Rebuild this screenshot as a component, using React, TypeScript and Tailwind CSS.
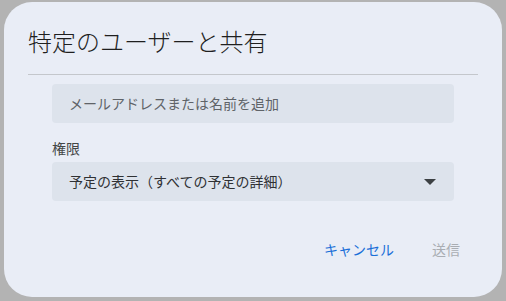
import React from 'react'

export default function App() {
  return (
    <div
      className="w-[506px] h-[301px] bg-[#b3b3b3] pl-[4px] pt-[2px]"
      style={{ fontFamily: '"Noto Sans CJK JP", "Noto Sans", Roboto, sans-serif' }}
    >
      <div className="w-[498px] h-[295px] bg-[#e9edf6] rounded-[28px] flex flex-col">
        {/* Title */}
        <h1 className="pl-[24px] pt-[23px] text-[24px] leading-[32px] text-[#1f1f1f] font-light">
          特定のユーザーと共有
        </h1>

        {/* Divider */}
        <div className="mx-[24px] mt-[17px] h-px bg-[#c4c7cc]" />

        {/* Body */}
        <div className="px-[48px] pt-[9px] flex flex-col">
          <div className="h-[39px] rounded-[4px] bg-[#dde3ec] flex items-center pl-[17px] text-[14px] text-[#5f6368]">
            メールアドレスまたは名前を追加
          </div>

          <div className="mt-[15px] text-[14px] leading-[20px] text-[#444746]">権限</div>

          <div className="mt-[4px] h-[39px] rounded-[4px] bg-[#dde3ec] flex items-center justify-between pl-[17px] pr-[17px] text-[14px] text-[#2f3134]">
            <span>予定の表示（すべての予定の詳細）</span>
            <svg width="12" height="6" viewBox="0 0 10 5" className="mr-[1px]">
              <path d="M0 0 L10 0 L5 5 Z" fill="#3c4043" />
            </svg>
          </div>
        </div>

        {/* Actions */}
        <div className="flex justify-end items-center gap-[38px] pr-[42px] mt-[38px] text-[14px] font-normal">
          <button className="text-[#1a6fd8]">キャンセル</button>
          <button className="text-[#a9adb3]">送信</button>
        </div>
      </div>
    </div>
  )
}
